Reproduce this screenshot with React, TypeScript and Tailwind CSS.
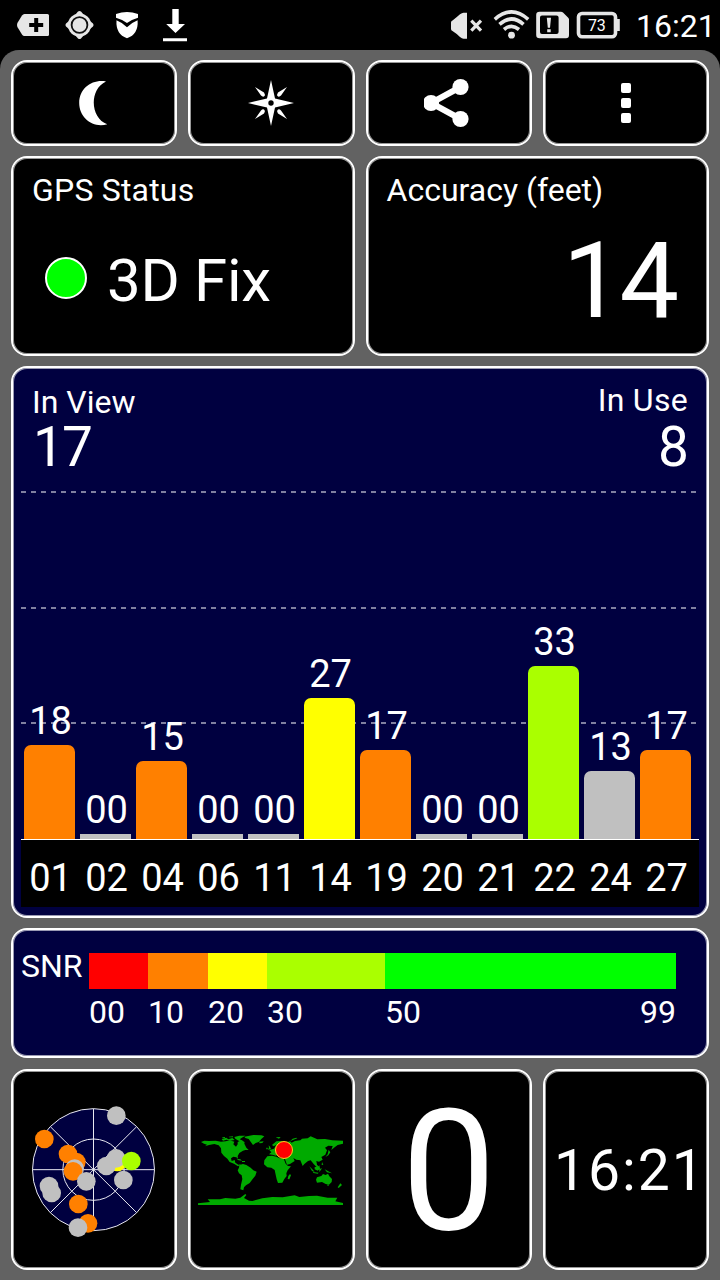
import React from "react";

type Satellite = { id: string; snr: string; height: number; color: string };

const ORANGE = "bg-[#ff8000]";
const SILVER = "bg-[#c0c0c0]";

const satellites: Satellite[] = [
  { id: "01", snr: "18", height: 94, color: ORANGE },
  { id: "02", snr: "00", height: 5, color: SILVER },
  { id: "04", snr: "15", height: 78, color: ORANGE },
  { id: "06", snr: "00", height: 5, color: SILVER },
  { id: "11", snr: "00", height: 5, color: SILVER },
  { id: "14", snr: "27", height: 141, color: "bg-[#ffff00]" },
  { id: "19", snr: "17", height: 89, color: ORANGE },
  { id: "20", snr: "00", height: 5, color: SILVER },
  { id: "21", snr: "00", height: 5, color: SILVER },
  { id: "22", snr: "33", height: 173, color: "bg-[#aaff00]" },
  { id: "24", snr: "13", height: 68, color: SILVER },
  { id: "27", snr: "17", height: 89, color: ORANGE },
];

const legend = [
  { label: "00", size: "w-[59px]", color: "bg-[#ff0000]" },
  { label: "10", size: "w-[60px]", color: ORANGE },
  { label: "20", size: "w-[59px]", color: "bg-[#ffff00]" },
  { label: "30", size: "w-[118px]", color: "bg-[#aaff00]" },
  { label: "50", size: "w-[291px]", color: "bg-[#00ff00]" },
];

function Card({ className = "", children }: { className?: string; children: React.ReactNode }) {
  return (
    <div
      className={`rounded-[16px] border-2 border-white shadow-[inset_0_0_0_1px_rgba(255,255,255,0.6)] ${className}`}
    >
      {children}
    </div>
  );
}

function StatusBar() {
  return (
    <header className="flex h-[50px] items-start bg-black text-[#e6e6e6]">
      <svg className="ml-[16px] shrink-0" width="34" height="50" viewBox="16 0 34 50">
        <path d="M24.5 14H47.5Q49 14 49 15.5V34.5Q49 36 47.5 36H24.5Q23 36 22 34.5L17.4 27Q16.6 25 17.4 23L22 15.5Q23 14 24.5 14Z" fill="currentColor" />
        <path d="M36.2 18v14M29.2 25h14" stroke="#000" strokeWidth="4" />
      </svg>
      <svg className="ml-[14px] shrink-0" width="32" height="50" viewBox="64 0 32 50">
        <g fill="currentColor">
          <circle cx="79.5" cy="25" r="11.6" />
          <path d="M75.5 14.5L78 11.5Q79.5 10.3 81 11.5L83.5 14.5ZM75.5 35.5L78 38.5Q79.5 39.7 81 38.5L83.5 35.5ZM69 21L66 23.5Q64.8 25 66 26.5L69 29ZM90 21L93 23.5Q94.2 25 93 26.5L90 29Z" />
        </g>
        <circle cx="79.5" cy="25" r="7.9" fill="none" stroke="#111" strokeWidth="1.8" />
      </svg>
      <svg className="ml-[19px] shrink-0" width="24" height="50" viewBox="115 0 24 50" fill="#fff">
        <path d="M116 14Q127 10 138 14V17.8Q132 19.5 127 23Q122 19.5 116 17.8Z" />
        <path d="M116.5 20.3Q122 22.5 127 27.2Q132 22.5 137.6 20.3Q138.6 34.5 127 38.2Q115.6 34.5 116.5 20.3Z" />
      </svg>
      <svg className="ml-[23px] shrink-0" width="26" height="50" viewBox="162 0 26 50" fill="#fff">
        <path d="M172.3 9H178.7V24H185L175.5 33L166.2 24H172.3ZM163 38.2H187V41.2H163Z" />
      </svg>

      <div className="ml-auto flex">
        <svg width="35" height="50" viewBox="449 0 35 50">
          <path d="M451 22.5Q451 21 452.5 20.5Q456.5 17.5 460 14.3Q462 12.7 463.5 12.7H467V38.7H463.5Q462 38.7 460 37Q456.5 33.5 452.5 31Q451 30.5 451 29Z" fill="currentColor" />
          <path d="M471.3 20.6L481 30.6M481 20.6L471.3 30.6" stroke="currentColor" strokeWidth="3.2" />
        </svg>
        <svg className="ml-[9px]" width="37" height="50" viewBox="493 0 37 50" fill="none" stroke="currentColor" strokeWidth="3.6">
          <path d="M494.8 19.3Q511.5 4.5 528.2 19.3" />
          <path d="M499.5 24.4Q511.5 13.6 523.5 24.4" />
          <path d="M504 29.5Q511.5 23.2 519 29.5" />
          <circle cx="511.5" cy="35.2" r="3.4" fill="currentColor" stroke="none" />
        </svg>
        <svg className="ml-[5px]" width="36" height="50" viewBox="535 0 36 50">
          <path fillRule="evenodd" d="M539.5 11.7H561Q562 11.7 563 12.5L568 17.5Q569 18.5 569 19.5V35Q569 38.3 566 38.3H539.5Q536.2 38.3 536.2 35V15Q536.2 11.7 539.5 11.7ZM542 15.5Q540 15.5 540 17.5V32Q540 34 542 34H556.5Q558.6 34 558.6 32V17.5Q558.6 15.5 556.5 15.5Z" fill="currentColor" />
          <path d="M546.8 17.7h4.200l-1 10h-2.200zM547.2 29.3h3.500v3h-3.500z" fill="currentColor" />
        </svg>
        <div className="relative ml-[5px] h-[50px] w-[45px]">
          <svg width="45" height="50" viewBox="576 0 45 50">
            <rect x="578.5" y="13.5" width="37" height="23.3" rx="3.5" fill="none" stroke="currentColor" strokeWidth="3.6" />
            <path d="M616.5 19h3.300v12h-3.300z" fill="currentColor" />
          </svg>
          <span className="absolute top-[18px] left-[12px] text-[16px] leading-none tracking-[-0.3px] text-white">73</span>
        </div>
        <span className="ml-[15px] w-[84px] pt-[10px] text-[32px] leading-none text-white">16:21</span>
      </div>
    </header>
  );
}

function Toolbar() {
  return (
    <div className="grid h-[86px] grid-cols-4 gap-[11px]">
      <Card className="flex items-center justify-center bg-black">
        <svg width="40" height="50" viewBox="74 78 40 50">
          <path d="M106 81.5C92 79 79.2 88.5 79.2 103C79.2 118 93 128.5 107.3 124.2C90.5 119 88.5 89.5 106 81.5Z" fill="#fff" />
        </svg>
      </Card>
      <Card className="flex items-center justify-center bg-black">
        <svg width="50" height="50" viewBox="-25 -25 50 50" fill="#fff">
          <path d="M0-23L4-4.5L23 0L4 4.5L0 23L-4 4.5L-23 0L-4-4.5Z" />
          <path d="M-16-16L-7-10.5Q-5.5-8-6.5-7Q-8-5.5-10-7.5ZM16-16L7-10.5Q5.5-8 6.5-7Q8-5.5 10-7.5ZM-16 16L-7 10.5Q-5.5 8-6.5 7Q-8 5.5-10 7.5ZM16 16L7 10.5Q5.5 8 6.5 7Q8 5.5 10 7.5Z" />
          <circle r="2.7" fill="#000" />
        </svg>
      </Card>
      <Card className="flex items-center justify-center bg-black">
        <svg width="50" height="50" viewBox="424 78 50 50" fill="#fff">
          <path d="M460.5 87L431 103L460.5 119" fill="none" stroke="#fff" strokeWidth="6" />
          <circle cx="460.5" cy="87" r="8.1" />
          <circle cx="431" cy="103" r="8.1" />
          <circle cx="460.5" cy="119" r="8.1" />
        </svg>
      </Card>
      <Card className="flex flex-col items-center justify-center gap-[5px] bg-black">
        <i className="size-[10px] rounded-[2px] bg-white" />
        <i className="size-[10px] rounded-[2px] bg-white" />
        <i className="size-[10px] rounded-[2px] bg-white" />
      </Card>
    </div>
  );
}

function SignalChart() {
  return (
    <Card className="mt-[10px] flex h-[552px] flex-col bg-[#000040] px-[8px]">
      <div className="flex h-[123px] justify-between pr-[11px] pl-[11px]">
        <div className="pt-[18px]">
          <div className="text-[32px] leading-none">In View</div>
          <div className="mt-[2px] pl-px text-[55px] leading-none tracking-[-2px]">17</div>
        </div>
        <div className="pt-[16px] text-right">
          <div className="text-[32px] leading-none tracking-[0.3px]">In Use</div>
          <div className="mt-[4px] mr-[-1px] text-[55px] leading-none">8</div>
        </div>
      </div>
      <div className="relative flex h-[348px] items-end gap-[5px] pl-[3px]">
        <svg className="absolute top-0 left-0" width="675" height="234" stroke="#8080a0" strokeWidth="2" strokeDasharray="5 5">
          <path d="M0 1H675M0 117H675M0 232H675" />
        </svg>
        {satellites.map((s) => (
          <div key={s.id} className="relative flex w-[51px] flex-col items-center">
            <span className="mb-[5px] pl-[2px] text-[38px] leading-none">{s.snr}</span>
            <div
              className={`w-full ${s.height > 5 ? "rounded-t-[7px]" : ""} ${s.color}`}
              style={{ height: s.height }}
            />
          </div>
        ))}
      </div>
      <div className="flex h-[68px] gap-[5px] border-t border-white bg-black pt-[19px] pl-[3px]">
        {satellites.map((s) => (
          <span key={s.id} className="flex w-[51px] justify-center pl-[2px] text-[38px] leading-none">{s.id}</span>
        ))}
      </div>
    </Card>
  );
}

function SnrLegend() {
  return (
    <Card className="mt-[10px] flex h-[130px] bg-[#000040] pt-[23px] pl-[8px]">
      <div className="mt-[-3px] w-[68px] text-[32px] leading-none">SNR</div>
      <div className="w-[587px]">
        <div className="flex h-[36px]">
          {legend.map((l) => (
            <div key={l.label} className={`${l.size} ${l.color}`} />
          ))}
        </div>
        <div className="mt-[7px] flex text-[32px] leading-none">
          {legend.map((l) => (
            <div key={l.label} className={`${l.size} flex justify-between`}>
              <span>{l.label}</span>
              {l.label === "50" && <span>99</span>}
            </div>
          ))}
        </div>
      </div>
    </Card>
  );
}

const skyDots: [number, number, string][] = [
  [349, 166, "#c0c0c0"],
  [133, 236, "#ff8000"],
  [229, 305, "#ff8000"],
  [204, 281, "#ff8000"],
  [224, 325, "#c0c0c0"],
  [219, 333, "#ff8000"],
  [259, 363, "#c0c0c0"],
  [352, 305, "#ffff00"],
  [348, 294, "#c0c0c0"],
  [319, 317, "#c0c0c0"],
  [394, 302, "#aaff00"],
  [370, 359, "#c0c0c0"],
  [147, 377, "#c0c0c0"],
  [155, 398, "#c0c0c0"],
  [235, 431, "#ff8000"],
  [264, 489, "#ff8000"],
  [234, 502, "#c0c0c0"],
];

function SkyPlot() {
  return (
    <svg width="144" height="144" viewBox="66 113 432 432">
      <g fill="none" stroke="#e8e8f0" strokeWidth="3">
        <circle cx="280.5" cy="328" r="183" fill="#000040" />
        <circle cx="280.5" cy="328" r="92" />
        <path d="M280.5 145V511M97.5 328H463.5M151 199L410 457M410 199L151 457" />
      </g>
      {skyDots.map(([x, y, fill], i) => (
        <circle key={i} cx={x} cy={y} r="28" fill={fill} />
      ))}
    </svg>
  );
}

function WorldMap() {
  return (
    <svg className="mr-[2px]" width="145" height="72" viewBox="39 72 435 216">
      <g fill="#00aa00">
        <path d="M39 91L48 96L58 92L72 93L92 92L108 95L122 94L134 91L148 95L145 103L153 110L158 103L158 96L166 92L177 99L184 113L191 120L181 120L174 122L163 129L158 138L159 146L154 142L145 140L138 145L140 153L149 150L151 158L160 164L168 163L159 169L147 161L134 156L127 146L117 138L109 128L108 115L101 106L88 102L72 105L60 109L66 104L57 101Z" />
        <path d="M110 87L124 83L130 88L142 84L149 90L136 92L125 89L114 92ZM148 81L163 77L181 77L173 82L164 88L171 91L179 97L177 102L167 95L158 91L151 86ZM154 146L166 148L171 152L161 151ZM171 153h9v3h-9z" />
        <path d="M178 80L205 75L229 76L238 79L229 87L221 96L212 99L204 105L198 97L191 87L181 84ZM222 95l14-1-4 5-8 1zM112 82l8-1v3h-8zM132 80l12-1v3h-12z" />
        <path d="M163 165L174 162L184 165L197 173L205 181L215 185L211 197L203 207L194 219L183 226L177 232L175 241L166 238L168 224L172 207L170 196L162 190L158 181L162 173Z" />
        <path d="M247 139L261 137L274 140L284 145L296 146L302 161L309 168L318 169L308 181L304 190L305 198L298 207L292 218L279 219L275 208L272 194L269 180L259 173L247 172L237 163L238 151ZM315 192l3 4-5 12-5-1 2-9z" />
        <path d="M252 133L259 127L253 120L267 116L274 104L266 109L261 105L274 94L289 93L301 98L315 94L320 98L330 93L346 91L351 86L368 85L377 79L397 88L420 87L442 91L474 92V101L458 105L447 113L439 120L443 108L430 107L420 113L426 121L421 134L409 141L413 149L402 155L394 153L396 164L403 172L397 173L386 162L377 151L369 153L358 162L353 168L346 151L334 149L325 144L329 153L315 162L306 164L300 148L290 143L299 137L284 131L273 137L262 134ZM251 106l4 4 3 7-9 2 3-6zM244 113h4v5h-4zM272 82l15-1-5 5zM315 94l8-8 11-3 3 2-13 5z" />
        <path d="M431 119l5 8-6 9-9 5 7-8zM411 156l4 8-5 1zM373 169l12 12 4 5-8-3zM389 171l10-1 4-4 2 10-7 6-9-4zM384 186l17 2-3 3-13-2zM403 177l8-2-5 7-3 4zM419 178l15 8 7 4-15-3z" />
        <path d="M396 202L409 198L414 192L422 195L429 191L433 199L441 207L440 216L432 224L422 222L411 216L396 218L393 209ZM426 224l6 1-3 4zM466 220l5 5-10 9-3-2z" />
        <path d="M39 280L75 276L68 268L105 268L121 264L151 266L166 263L181 252L184 255L177 264L192 272L202 273L232 265L262 261L293 262L329 256L343 261L372 258L396 257L428 263L457 263L451 274L474 279V285H39Z" />
      </g>
      <circle cx="297" cy="120" r="25.5" fill="#ff0000" stroke="#ffcc20" strokeWidth="3" />
    </svg>
  );
}

export default function App() {
  return (
    <main className="h-[1280px] w-[720px] overflow-hidden bg-black font-[Roboto,sans-serif] text-white">
      <StatusBar />
      <section className="h-[1230px] rounded-t-[19px] bg-[#626262] px-[11px] pt-[10px]">
        <Toolbar />
        <div className="mt-[10px] grid h-[200px] grid-cols-2 gap-[11px]">
          <Card className="bg-black pt-[16px] pl-[19px]">
            <div className="text-[32px] leading-none tracking-[0.2px]">GPS Status</div>
            <div className="mt-[45px] flex items-center pl-[13px]">
              <div className="mb-[7px] size-[42px] rounded-full border-2 border-white bg-[#00ff00]" />
              <div className="ml-[20px] text-[60px] leading-none tracking-[-0.3px]">3D Fix</div>
            </div>
          </Card>
          <Card className="bg-black pt-[16px] pr-[31px] pl-[19px]">
            <div className="text-[32px] leading-none">Accuracy (feet)</div>
            <div className="mt-[22px] text-right text-[106px] leading-none tracking-[-3px]">14</div>
          </Card>
        </div>
        <SignalChart />
        <SnrLegend />
        <div className="mt-[11px] grid h-[201px] grid-cols-4 gap-[11px]">
          <Card className="flex items-center justify-center bg-black">
            <SkyPlot />
          </Card>
          <Card className="flex items-center justify-center bg-black">
            <WorldMap />
          </Card>
          <Card className="flex justify-center bg-black pt-[17px]">
            <span className="text-[168px] leading-none">0</span>
          </Card>
          <Card className="flex justify-center bg-black pt-[71px]">
            <span className="pl-[8px] text-[57px] leading-none tracking-[2px]">16:21</span>
          </Card>
        </div>
      </section>
    </main>
  );
}
